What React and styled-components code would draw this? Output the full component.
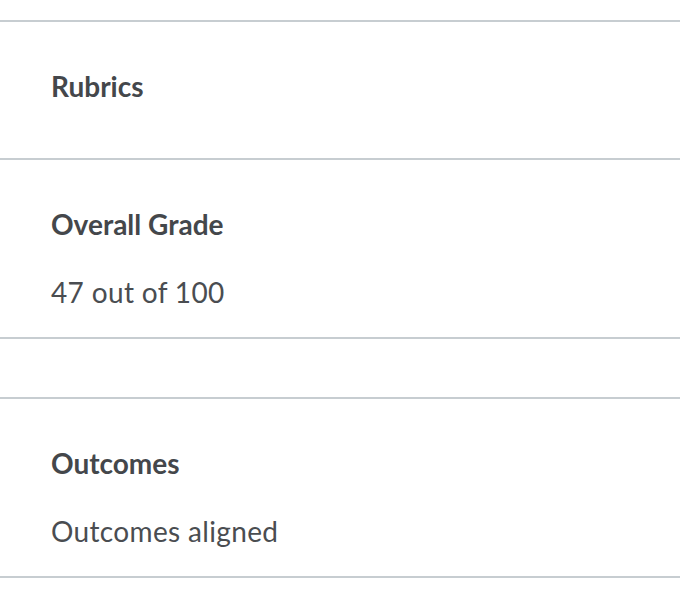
import styled, { createGlobalStyle } from "styled-components";

const GlobalStyle = createGlobalStyle`
  body {
    margin: 0;
    background: #fff;
    font-family: Lato, "Open Sans", sans-serif;
    color: #474a4e;
  }
`;

const Page = styled.div`
  padding-top: 20px;
`;

const Section = styled.section`
  border-top: 2px solid #c7cdd1;
  padding: 47px 28px ${(p) => p.$bottom ?? 27}px 51px;

  &:last-child {
    border-bottom: 2px solid #c7cdd1;
  }
`;

const Spacer = styled.div`
  border-top: 2px solid #c7cdd1;
  height: 58px;
`;

const Heading = styled.h3`
  margin: 0;
  font-size: 28px;
  line-height: 35px;
  font-weight: 700;
  color: #44474b;
`;

const Body = styled.p`
  margin: 33px 0 0;
  font-size: 28px;
  line-height: 35px;
  font-weight: 400;
  letter-spacing: 0.35px;
  color: #4a4d51;
`;

const App = () => {
  return (
    <Page>
      <GlobalStyle />
      <Section $bottom={54}>
        <Heading>Rubrics</Heading>
      </Section>
      <Section>
        <Heading>Overall Grade</Heading>
        <Body>47 out of 100</Body>
      </Section>
      <Spacer />
      <Section>
        <Heading>Outcomes</Heading>
        <Body>Outcomes aligned</Body>
      </Section>
    </Page>
  );
};

export default App;
